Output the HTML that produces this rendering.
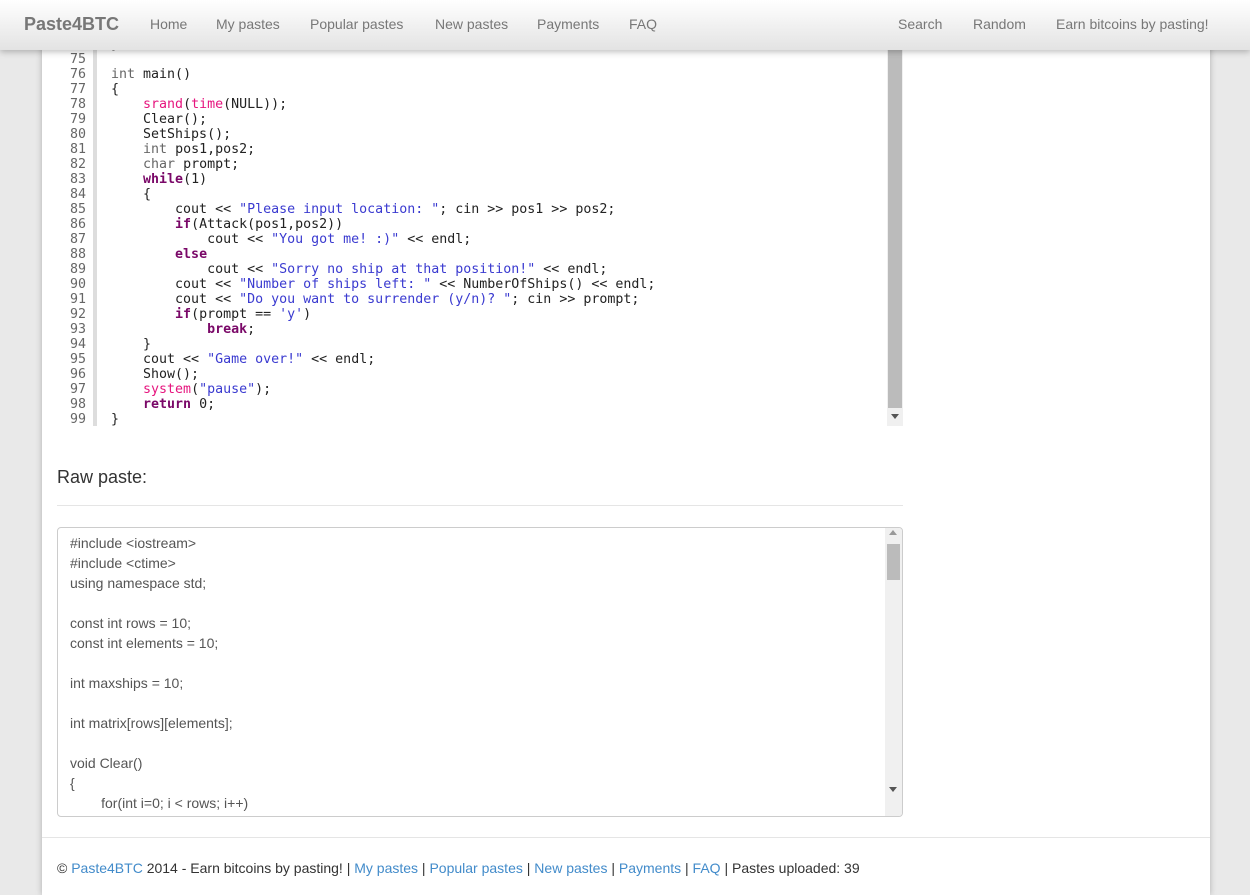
<!DOCTYPE html>
<html><head><meta charset="utf-8"><style>
*{box-sizing:border-box;margin:0;padding:0}
body{width:1250px;height:895px;overflow:hidden;background:#e9e9e9;font-family:"Liberation Sans",sans-serif;position:relative}
.wrap{position:absolute;left:42px;top:0;width:1168px;height:895px;background:#fff;box-shadow:0 0 6px rgba(0,0,0,.25)}
.nav{position:absolute;left:0;top:0;width:1250px;height:50px;background:linear-gradient(#fff,#e3e3e3);box-shadow:0 2px 6px rgba(0,0,0,.25);z-index:5;font-size:14px;color:#777}
.nav span{position:absolute;top:16px}
.brand{font-size:18px;font-weight:bold;color:#777;top:14px!important}
.code{position:absolute;left:42px;top:50px;width:861px;height:376px;overflow:hidden;font-family:"DejaVu Sans Mono",monospace;font-size:13.3px;line-height:15px;color:#222}
.gut{position:absolute;left:0;top:0;width:55px;height:376px;color:#666;border-right:4px solid #ddd}
.lines{position:absolute;top:-13px;right:7px;text-align:right;white-space:pre}
.src{position:absolute;left:69px;white-space:pre}
.t{color:#666}.k{color:#7a0868;font-weight:bold}.f{color:#e6157e}.s{color:#3a3ad0}
.sb{position:absolute;left:845px;top:0;width:16px;height:376px;background:#f0f0f0}
.sb i{position:absolute;left:1px;top:0;width:14px;height:358px;background:#bbb}
h3{position:absolute;left:57px;top:467px;font-size:18px;font-weight:normal;color:#333}
.hr{position:absolute;left:57px;top:505px;width:846px;height:1px;background:#e5e5e5}
.ta{position:absolute;left:57px;top:527px;width:846px;height:290px;border:1px solid #ccc;border-radius:4px;overflow:hidden;font-size:14px;line-height:20px;color:#555;padding:5px 0 0 12px;white-space:pre}
.ta .sb2{position:absolute;right:0;top:0;width:17px;height:290px;background:#f0f0f0}
.ta .sb2 i{position:absolute;left:2px;top:16px;width:13px;height:36px;background:#bbb}
.fhr{position:absolute;left:42px;top:837px;width:1168px;height:1px;background:#e5e5e5}
.foot{position:absolute;left:57px;top:860px;font-size:14px;color:#333}
.foot a{color:#428bca;text-decoration:none}
</style></head><body>
<div class="wrap"></div>
<div class="nav">
<span class="brand" style="left:24px">Paste4BTC</span>
<span style="left:150px">Home</span><span style="left:216px">My pastes</span><span style="left:310px">Popular pastes</span><span style="left:435px">New pastes</span><span style="left:537px">Payments</span><span style="left:629px">FAQ</span>
<span style="left:898px">Search</span><span style="left:973px">Random</span><span style="left:1056px">Earn bitcoins by pasting!</span>
</div>
<div class="code">
<div class="gut"><div class="lines">74
75
76
77
78
79
80
81
82
83
84
85
86
87
88
89
90
91
92
93
94
95
96
97
98
99</div></div>
<div class="src" style="top:-13px">}

<span class="t">int</span> main()
{
    <span class="f">srand</span>(<span class="f">time</span>(NULL));
    Clear();
    SetShips();
    <span class="t">int</span> pos1,pos2;
    <span class="t">char</span> prompt;
    <span class="k">while</span>(1)
    {
        cout &lt;&lt; <span class="s">"Please input location: "</span>; cin &gt;&gt; pos1 &gt;&gt; pos2;
        <span class="k">if</span>(Attack(pos1,pos2))
            cout &lt;&lt; <span class="s">"You got me! :)"</span> &lt;&lt; endl;
        <span class="k">else</span>
            cout &lt;&lt; <span class="s">"Sorry no ship at that position!"</span> &lt;&lt; endl;
        cout &lt;&lt; <span class="s">"Number of ships left: "</span> &lt;&lt; NumberOfShips() &lt;&lt; endl;
        cout &lt;&lt; <span class="s">"Do you want to surrender (y/n)? "</span>; cin &gt;&gt; prompt;
        <span class="k">if</span>(prompt == <span class="s">'y'</span>)
            <span class="k">break</span>;
    }
    cout &lt;&lt; <span class="s">"Game over!"</span> &lt;&lt; endl;
    Show();
    <span class="f">system</span>(<span class="s">"pause"</span>);
    <span class="k">return</span> 0;
}</div>
<div class="sb"><i></i><div style="position:absolute;left:4px;top:364px;border:4px solid transparent;border-top:5px solid #555"></div></div>
</div>
<h3>Raw paste:</h3>
<div class="hr"></div>
<div class="ta">#include &lt;iostream&gt;
#include &lt;ctime&gt;
using namespace std;

const int rows = 10;
const int elements = 10;

int maxships = 10;

int matrix[rows][elements];

void Clear()
{
        for(int i=0; i &lt; rows; i++)<div class="sb2"><div style="position:absolute;left:4px;top:2px;border:4px solid transparent;border-bottom:5px solid #999;border-top:0"></div><i></i><div style="position:absolute;left:4px;top:259px;border:4px solid transparent;border-top:5px solid #555"></div></div></div>
<div class="fhr"></div>
<div class="foot">© <a>Paste4BTC</a> 2014 - Earn bitcoins by pasting! | <a>My pastes</a> | <a>Popular pastes</a> | <a>New pastes</a> | <a>Payments</a> | <a>FAQ</a> | Pastes uploaded: 39</div>
</body></html>
